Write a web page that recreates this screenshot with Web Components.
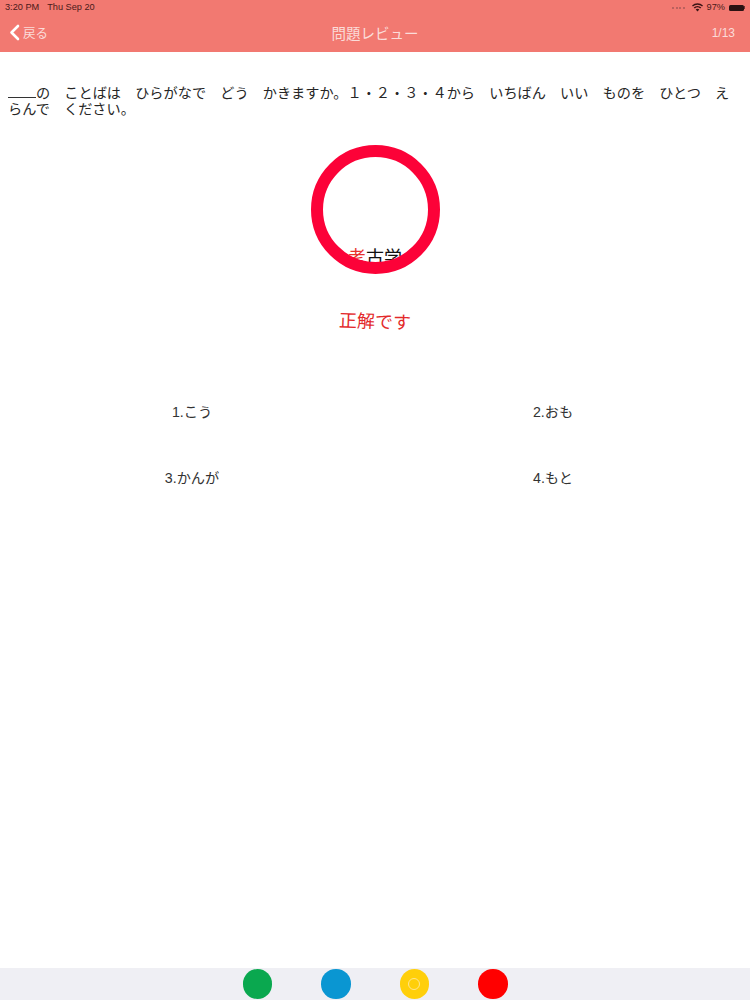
<!DOCTYPE html>
<html lang="ja"><head><meta charset="utf-8"><style>
html,body{margin:0;padding:0;background:#fff}
body{font-family:"Noto Sans CJK JP","Liberation Sans",sans-serif;width:750px;height:1000px;overflow:hidden}
</style></head><body>
<review-app></review-app>
<script>
const FONT='"Liberation Sans","Noto Sans CJK JP",sans-serif';
class El extends HTMLElement{
  constructor(){super();this.attachShadow({mode:'open'}).innerHTML=this.constructor.html;}
}
class StatusBar extends El{static html=`<style>
:host{display:flex;align-items:center;justify-content:space-between;height:15px;padding:0 5px 0 5px;font:9.2px/15px ${FONT};color:#4a1a1a;flex:none}
.l{display:flex;gap:8px}.r{display:flex;align-items:center;gap:4px}
.dots{display:flex;gap:1.5px;margin-right:3px}.dots i{width:2px;height:2px;border-radius:50%;background:#a85a58}
.bat{display:flex;align-items:center}.bat b{display:block;width:15px;height:6px;background:#2a1212;border-radius:1.5px}.bat u{display:block;width:1px;height:3px;background:#6b3333}
</style><div class="l"><span>3:20 PM</span><span>Thu Sep 20</span></div>
<div class="r"><span class="dots"><i></i><i></i><i></i><i></i></span>
<svg width="11" height="9" viewBox="0 0 11 9"><path d="M5.5 8.6 3.7 6.6a2.6 2.6 0 0 1 3.6 0zM2.8 5.6 1.7 4.4a5.5 5.5 0 0 1 7.6 0L8.2 5.6a4 4 0 0 0-5.4 0zM.9 3.5 0 2.4a8 8 0 0 1 11 0l-.9 1.1a6.6 6.6 0 0 0-9.2 0z" fill="#3a1414"/></svg>
<span>97%</span><span class="bat"><b></b><u></u></span></div>`}
class NavBar extends El{static html=`<style>
:host{display:grid;grid-template-columns:1fr auto 1fr;align-items:center;height:35px;padding:0 15px 2px 15px;color:#fbdcd9;flex:none}
.back{display:flex;align-items:center;gap:3px;font-size:12.5px;margin-left:-6px}
.t{font-size:14.5px}.n{justify-self:end;font:12px ${FONT}}
</style><div class="back"><svg width="11" height="17" viewBox="0 0 11 17"><path d="M9 2 2.5 8.5 9 15" fill="none" stroke="#fff" stroke-width="2.6" stroke-linecap="round" stroke-linejoin="round"/></svg><slot name="back"></slot></div>
<div class="t"><slot name="title"></slot></div><div class="n"><slot name="count"></slot></div>`}
class AppHeader extends El{static html=`<style>
:host{display:flex;flex-direction:column;height:52px;background:#f27971;flex:none}
</style><slot></slot>`}
class QuestionText extends El{static html=`<style>
:host{display:block;padding:33px 10px 0 8px;font-size:14.18px;line-height:16px;color:#262626;height:50px}
u{display:inline-block;width:28px;height:1px;background:#333;vertical-align:baseline}
</style><u></u><slot></slot>`}
class QuizMark extends El{static html=`<style>
:host{display:block;position:relative;height:175px}
.w{position:absolute;left:0;right:0;top:111px;text-align:center;font-size:18px;line-height:24px;color:#111}
.w em{font-style:normal;color:#e8302c}
.ring{position:absolute;left:311px;top:10px;width:129px;height:129px;box-sizing:border-box;border:12px solid #fc0238;border-radius:50%}
</style><div class="w"><em>考</em>古学</div><div class="ring"></div>`}
class ResultText extends El{static html=`<style>
:host{display:block;height:92px}
div{text-align:center;font-size:18px;line-height:24px;color:#e3292a;transform:rotate(2deg)}
</style><div><slot></slot></div>`}
class ChoiceGrid extends El{static html=`<style>
:host{display:grid;grid-template-columns:384px 338px;grid-auto-rows:66px;font-size:14.2px;color:#333;flex:none}
</style><slot></slot>`}
class ChoiceItem extends El{static html=`<style>
:host{display:flex;justify-content:center;align-items:flex-start;line-height:20px}
</style><slot></slot>`}
class ToolBar extends El{static html=`<style>
:host{display:flex;justify-content:center;align-items:center;gap:49px;height:32px;background:#efeff4;flex:none;padding-left:0}
</style><slot></slot>`}
class ToolDot extends El{static html=`<style>
:host{display:flex;align-items:center;justify-content:center;width:29.5px;height:29.5px;border-radius:50%;background:var(--c)}
i{display:none;width:10px;height:10px;border:1px solid #ffe68f;border-radius:50%}
:host([mark]) i{display:block}
</style><i></i>`}
class ReviewApp extends El{static html=`<style>
:host{display:flex;flex-direction:column;height:1000px;font-family:${FONT}}
.mid{flex:1}
</style>
<app-header><status-bar></status-bar><nav-bar><span slot="back">戻る</span><span slot="title">問題レビュー</span><span slot="count">1/13</span></nav-bar></app-header>
<question-text>の　ことばは　ひらがなで　どう　かきますか。１・２・３・４から　いちばん　いい　ものを　ひとつ　えらんで　ください。</question-text>
<quiz-mark></quiz-mark>
<result-text>正解です</result-text>
<choice-grid><choice-item>1.こう</choice-item><choice-item>2.おも</choice-item><choice-item>3.かんが</choice-item><choice-item>4.もと</choice-item></choice-grid>
<div class="mid"></div>
<tool-bar><tool-dot style="--c:#0aa84f"></tool-dot><tool-dot style="--c:#0a96d2"></tool-dot><tool-dot style="--c:#ffcf0a" mark></tool-dot><tool-dot style="--c:#ff0000"></tool-dot></tool-bar>`}
[['status-bar',StatusBar],['nav-bar',NavBar],['app-header',AppHeader],['question-text',QuestionText],['quiz-mark',QuizMark],['result-text',ResultText],['choice-grid',ChoiceGrid],['choice-item',ChoiceItem],['tool-bar',ToolBar],['tool-dot',ToolDot],['review-app',ReviewApp]].forEach(([n,c])=>customElements.define(n,c));
</script></body></html>
